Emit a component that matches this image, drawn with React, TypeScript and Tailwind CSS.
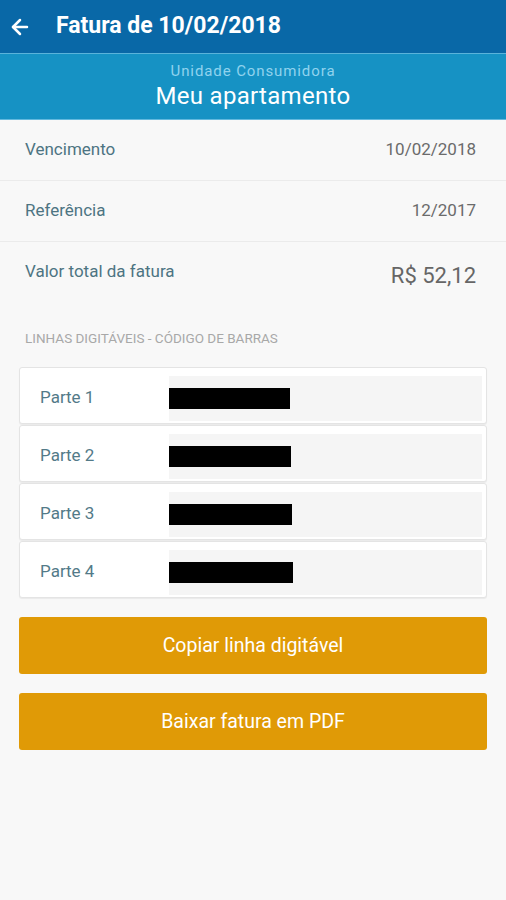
import { ArrowLeft } from "lucide-react";

const PARTES = [
  { nome: "Parte 1", w: "w-[121px]" },
  { nome: "Parte 2", w: "w-[122px]" },
  { nome: "Parte 3", w: "w-[123px]" },
  { nome: "Parte 4", w: "w-[124px]" },
];

function InfoRow({ label, value }: { label: string; value: string }) {
  return (
    <div className="flex h-[61px] items-start justify-between border-b border-[#ebebeb] pl-[25px] pr-[30px] pt-[19px]">
      <span className="text-[17px] leading-[20px] text-[#4d7482]">{label}</span>
      <span className="text-[17px] leading-[20px] text-[#6b6b6b]">{value}</span>
    </div>
  );
}

export default function App() {
  return (
    <div className="min-h-[900px] w-full bg-[#f8f8f8] font-['Roboto',sans-serif]">
      <header className="flex h-[54px] items-center bg-[#0968a7] border-b border-[#5ab3da]">
        <ArrowLeft className="ml-[8px] h-[24px] w-[24px] text-white" strokeWidth={2.5} />
        <h1 className="ml-[24px] text-[23px] font-bold text-white">Fatura de 10/02/2018</h1>
      </header>

      <div className="flex h-[66px] flex-col items-center bg-[#1692c4] border-b border-[#62b9de] pt-[8px]">
        <span className="text-[15px] leading-[18px] tracking-[0.9px] text-[#90d3ee]">Unidade Consumidora</span>
        <span className="mt-[2px] text-[24px] leading-[28px] tracking-[0.3px] text-white">Meu apartamento</span>
      </div>

      <InfoRow label="Vencimento" value="10/02/2018" />
      <InfoRow label="Referência" value="12/2017" />
      <div className="flex items-start justify-between pl-[25px] pr-[30px] pt-[19px]">
        <span className="text-[17px] leading-[20px] text-[#4d7482]">Valor total da fatura</span>
        <span className="mt-[2px] text-[22px] leading-[26px] text-[#666]">R$ 52,12</span>
      </div>

      <p className="mt-[41px] px-[25px] text-[13.5px] leading-[16px] text-[#a8a8a8]">LINHAS DIGITÁVEIS - CÓDIGO DE BARRAS</p>

      <div className="mx-[19px] mt-[21px] flex flex-col gap-[1px]">
        {PARTES.map((p) => (
          <div
            key={p.nome}
            className="flex h-[57px] items-start rounded-[3px] border border-[#e4e4e4] bg-white shadow-[0_1px_1px_rgba(0,0,0,0.06)]"
          >
            <span className="w-[149px] shrink-0 self-center pt-[3px] pl-[20px] text-[17px] leading-[20px] text-[#537a88]">{p.nome}</span>
            <div className="mr-[4px] mt-[8px] flex h-[45px] flex-1 items-center bg-[#f5f5f5]">
              <div className={`h-[21px] ${p.w} bg-black`} />
            </div>
          </div>
        ))}
      </div>

      <div className="mx-[19px] mt-[19px] flex flex-col gap-[19px]">
        <button className="h-[57px] rounded-[3px] bg-[#e09a06] text-[19.5px] text-white">Copiar linha digitável</button>
        <button className="h-[57px] rounded-[3px] bg-[#e09a06] text-[19.5px] text-white">Baixar fatura em PDF</button>
      </div>
    </div>
  );
}
